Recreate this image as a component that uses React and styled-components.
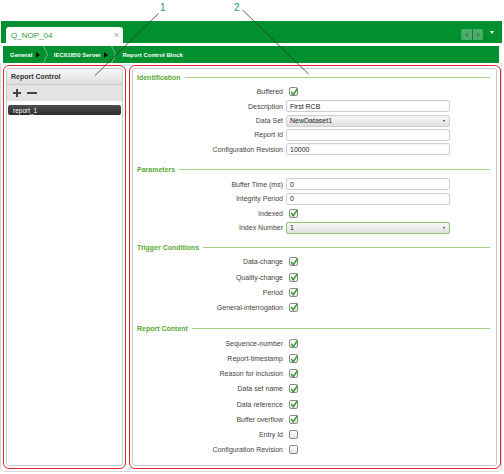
import React from 'react';
import styled, { createGlobalStyle } from 'styled-components';

const Global = createGlobalStyle`
  html, body { margin: 0; padding: 0; background: #fff; }
  body { font-family: "Liberation Sans", Arial, sans-serif; }
  * { box-sizing: border-box; }
`;

const GREEN = '#00902f';

const Page = styled.div`
  position: relative;
  width: 504px;
  height: 474px;
  overflow: hidden;
  background: #fff;
  display: flex;
  flex-direction: column;
`;

const CalloutSpace = styled.div`
  flex: none;
  height: 21px;
`;

const CalloutNumber = styled.span`
  position: absolute;
  top: 2px;
  left: ${(p) => p.$x}px;
  font-size: 10px;
  line-height: 12px;
  color: #22995a;
  z-index: 5;
`;

const CalloutLines = styled.svg`
  position: absolute;
  left: 0;
  top: 0;
  width: 504px;
  height: 474px;
  pointer-events: none;
  z-index: 5;
`;

const TopBar = styled.div`
  flex: none;
  height: 22px;
  margin: 0 2px 0 1px;
  background: ${GREEN};
  display: flex;
  align-items: flex-end;
  padding: 0 8px 0 5px;
`;

const Tab = styled.div`
  width: 117px;
  height: 16px;
  background: #fff;
  border-radius: 3px 3px 0 0;
  display: flex;
  align-items: center;
  justify-content: space-between;
  padding: 0 4px 0 5px;
`;

const TabTitle = styled.span`
  font-size: 8px;
  color: #2f9a3c;
`;

const TabClose = styled.span`
  font-size: 9px;
  line-height: 9px;
  color: #a0a0a0;
`;

const BarTools = styled.div`
  margin-left: auto;
  align-self: flex-start;
  margin-top: 8px;
  display: flex;
  align-items: flex-start;
`;

const NavGroup = styled.div`
  display: flex;
  height: 11px;
  border-radius: 2px;
  overflow: hidden;
  background: rgba(255, 255, 255, 0.28);
`;

const NavButton = styled.div`
  width: 11px;
  height: 11px;
  display: flex;
  align-items: center;
  justify-content: center;
  border-left: ${(p) => (p.$sep ? '1px solid rgba(0,60,20,0.45)' : 'none')};
`;

const MenuArrow = styled.div`
  margin: 2px 0 0 7px;
  width: 0;
  height: 0;
  border-left: 2.5px solid transparent;
  border-right: 2.5px solid transparent;
  border-top: 3px solid #fff;
`;

const Breadcrumb = styled.div`
  flex: none;
  height: 17px;
  margin: 3px 5px 0 3px;
  background: ${GREEN};
  display: flex;
  align-items: center;
  padding-left: 7px;
`;

const CrumbText = styled.span`
  font-size: 6px;
  font-weight: bold;
  color: #fff;
  white-space: nowrap;
`;

const CrumbArrow = styled.span`
  margin-left: 3.5px;
  width: 0;
  height: 0;
  border-top: 3px solid transparent;
  border-bottom: 3px solid transparent;
  border-left: 4px solid #111;
`;

const CrumbSep = styled.svg`
  margin: 0 6px 0 3px;
  width: 5px;
  height: 17px;
  flex: none;
`;

const Body = styled.div`
  flex: none;
  height: 409px;
  margin-right: 2px;
  border: 1px solid #d9d9d9;
  border-top: none;
  border-radius: 0 0 5px 5px;
  padding: 2px 0 2.5px 2px;
  display: flex;
  gap: 3px;
`;

const RedFrame = styled.div`
  width: ${(p) => (p.$w ? `${p.$w}px` : 'auto')};
  flex: ${(p) => (p.$w ? 'none' : '1')};
  border: 1px solid #e8232b;
  border-radius: 6px;
  padding: 2px ${(p) => (p.$right ? '3px' : '2px')} 2px 2px;
  display: flex;
`;

const GrayPanel = styled.div`
  flex: 1;
  border: 1px solid #cbcbcb;
  border-radius: 3px;
  display: flex;
  flex-direction: column;
  overflow: hidden;
`;

const PanelHeader = styled.div`
  height: 16px;
  flex: none;
  display: flex;
  align-items: center;
  padding-left: 4px;
  font-size: 7px;
  font-weight: bold;
  color: #333;
  background: linear-gradient(#f7f7f7, #dedede);
  border-bottom: 1px solid #c6c6c6;
`;

const Toolbar = styled.div`
  height: 16px;
  flex: none;
  display: flex;
  align-items: center;
  gap: 6px;
  padding-left: 6px;
  background: #e3e3e3;
`;

const ListItem = styled.div`
  margin: 4px 1px 0 1px;
  height: 10px;
  border-radius: 2px;
  background: linear-gradient(#505050, #2c2c2c);
  color: #fff;
  font-size: 6.5px;
  display: flex;
  align-items: center;
  padding-left: 5px;
`;

const FormArea = styled.div`
  flex: 1;
  padding: 1px 6px 0 4px;
  display: flex;
  flex-direction: column;
`;

const Section = styled.div`
  margin-top: ${(p) => p.$gap || 0}px;
  display: flex;
  flex-direction: column;
`;

const SectionTitle = styled.div`
  height: 14px;
  display: flex;
  align-items: center;
  gap: 4px;
  font-size: 7px;
  font-weight: bold;
  color: #5aa936;
  &::after {
    content: '';
    flex: 1;
    height: 1px;
    background: #a3d382;
  }
`;

const Row = styled.div`
  height: ${(p) => p.$h}px;
  display: grid;
  grid-template-columns: 146px 1fr;
  column-gap: 3px;
  align-items: center;
`;

const Label = styled.span`
  text-align: right;
  font-size: 7px;
  color: #444;
  white-space: nowrap;
`;

const Field = styled.div`
  width: 164px;
  height: 12px;
  border: 1px solid ${(p) => (p.$focus ? '#8fcb66' : '#cfcfcf')};
  border-radius: 2px;
  background: ${(p) => (p.$select ? 'linear-gradient(#fafafa, #dedede)' : '#fff')};
  box-shadow: ${(p) => (p.$focus ? '0 0 1px #b6e09a' : 'inset 0 1px 1px rgba(0,0,0,0.04)')};
  display: flex;
  align-items: center;
  padding: 0 4px 0 3px;
  font-size: 7px;
  color: #222;
  &::after {
    content: '';
    display: ${(p) => (p.$select ? 'block' : 'none')};
    margin-left: auto;
    width: 0;
    height: 0;
    border-left: 1.5px solid transparent;
    border-right: 1.5px solid transparent;
    border-top: 2px solid #333;
  }
`;

const Box = styled.div`
  margin-left: 3px;
  width: 9px;
  height: 9px;
  border: 1px solid #8a8a8a;
  border-radius: 2px;
  background: linear-gradient(#ffffff, #e4e4e4);
  position: relative;
`;

const Tick = styled.svg`
  position: absolute;
  left: -1px;
  top: -1.5px;
  width: 10px;
  height: 10px;
  overflow: visible;
`;

function Checkbox({ checked }) {
  return (
    <Box>
      {checked && (
        <Tick viewBox="0 0 10 10">
          <path d="M2.6 5.4 L4.2 7.9 L8.2 2" fill="none" stroke="#2c9d2a" strokeWidth="1.4" strokeLinecap="round" strokeLinejoin="round" />
        </Tick>
      )}
    </Box>
  );
}

const sections = [
  {
    title: 'Identification',
    gap: 0,
    rows: [
      { label: 'Buffered', type: 'check', checked: true, h: 15.2 },
      { label: 'Description', type: 'input', value: 'First RCB', h: 14.3 },
      { label: 'Data Set', type: 'select', value: 'NewDataset1', h: 14.3 },
      { label: 'Report Id', type: 'input', value: '', h: 14.3 },
      { label: 'Configuration Revision', type: 'input', value: '10000', h: 14.3 },
    ],
  },
  {
    title: 'Parameters',
    gap: 6.5,
    rows: [
      { label: 'Buffer Time (ms)', type: 'input', value: '0', h: 14.5 },
      { label: 'Integrity Period', type: 'input', value: '0', h: 14.5 },
      { label: 'Indexed', type: 'check', checked: true, h: 14.5 },
      { label: 'Index Number', type: 'select', value: '1', focus: true, h: 14.5 },
    ],
  },
  {
    title: 'Trigger Conditions',
    gap: 5.5,
    rows: [
      { label: 'Data-change', type: 'check', checked: true, h: 15.15 },
      { label: 'Quality-change', type: 'check', checked: true, h: 15.15 },
      { label: 'Period', type: 'check', checked: true, h: 15.15 },
      { label: 'General-interrogation', type: 'check', checked: true, h: 15.15 },
    ],
  },
  {
    title: 'Report Content',
    gap: 7,
    rows: [
      { label: 'Sequence-number', type: 'check', checked: true, h: 15.15 },
      { label: 'Report-timestamp', type: 'check', checked: true, h: 15.15 },
      { label: 'Reason for inclusion', type: 'check', checked: true, h: 15.15 },
      { label: 'Data set name', type: 'check', checked: true, h: 15.15 },
      { label: 'Data reference', type: 'check', checked: true, h: 15.15 },
      { label: 'Buffer overflow', type: 'check', checked: true, h: 15.15 },
      { label: 'Entry Id', type: 'check', checked: false, h: 15.15 },
      { label: 'Configuration Revision', type: 'check', checked: false, h: 15.15 },
    ],
  },
];

function Control({ row }) {
  if (row.type === 'check') return <Checkbox checked={row.checked} />;
  return (
    <Field $select={row.type === 'select'} $focus={row.focus}>
      {row.value}
    </Field>
  );
}

function Sep() {
  return (
    <CrumbSep viewBox="0 0 5 17">
      <polyline points="0.5,0 4.5,8.5 0.5,17" fill="none" stroke="rgba(255,255,255,0.6)" strokeWidth="0.7" />
    </CrumbSep>
  );
}

export default function App() {
  return (
    <>
      <Global />
      <Page>
        <CalloutSpace />
        <CalloutNumber $x={160}>1</CalloutNumber>
        <CalloutNumber $x={234}>2</CalloutNumber>
        <CalloutLines viewBox="0 0 504 474">
          <line x1="158.5" y1="13.5" x2="95" y2="75.5" stroke="#333" strokeWidth="0.8" />
          <line x1="242.5" y1="10" x2="308.5" y2="74" stroke="#333" strokeWidth="0.8" />
        </CalloutLines>

        <TopBar>
          <Tab>
            <TabTitle>Q_NOP_04</TabTitle>
            <TabClose>×</TabClose>
          </Tab>
          <BarTools>
            <NavGroup>
              <NavButton>
                <svg width="5" height="6" viewBox="0 0 5 6"><path d="M4 0.5 L0.8 3 L4 5.5 Z" fill="#4f7f58" /></svg>
              </NavButton>
              <NavButton $sep>
                <svg width="5" height="6" viewBox="0 0 5 6"><path d="M1 0.5 L4.2 3 L1 5.5 Z" fill="#4f7f58" /></svg>
              </NavButton>
            </NavGroup>
            <MenuArrow />
          </BarTools>
        </TopBar>

        <Breadcrumb>
          <CrumbText>General</CrumbText>
          <CrumbArrow />
          <Sep />
          <CrumbText>IEC61850 Server</CrumbText>
          <CrumbArrow />
          <Sep />
          <CrumbText>Report Control Block</CrumbText>
        </Breadcrumb>

        <Body>
          <RedFrame $w={123}>
            <GrayPanel>
              <PanelHeader>Report Control</PanelHeader>
              <Toolbar>
                <svg width="8" height="8" viewBox="0 0 8 8">
                  <path d="M4 0 V8 M0 4 H8" stroke="#444" strokeWidth="2" />
                </svg>
                <svg width="10" height="8" viewBox="0 0 10 8">
                  <path d="M0 4 H10" stroke="#444" strokeWidth="2" />
                </svg>
              </Toolbar>
              <ListItem>report_1</ListItem>
            </GrayPanel>
          </RedFrame>

          <RedFrame $right>
            <GrayPanel>
              <FormArea>
                {sections.map((s) => (
                  <Section key={s.title} $gap={s.gap}>
                    <SectionTitle>{s.title}</SectionTitle>
                    {s.rows.map((r) => (
                      <Row key={r.label} $h={r.h}>
                        <Label>{r.label}</Label>
                        <Control row={r} />
                      </Row>
                    ))}
                  </Section>
                ))}
              </FormArea>
            </GrayPanel>
          </RedFrame>
        </Body>
      </Page>
    </>
  );
}
